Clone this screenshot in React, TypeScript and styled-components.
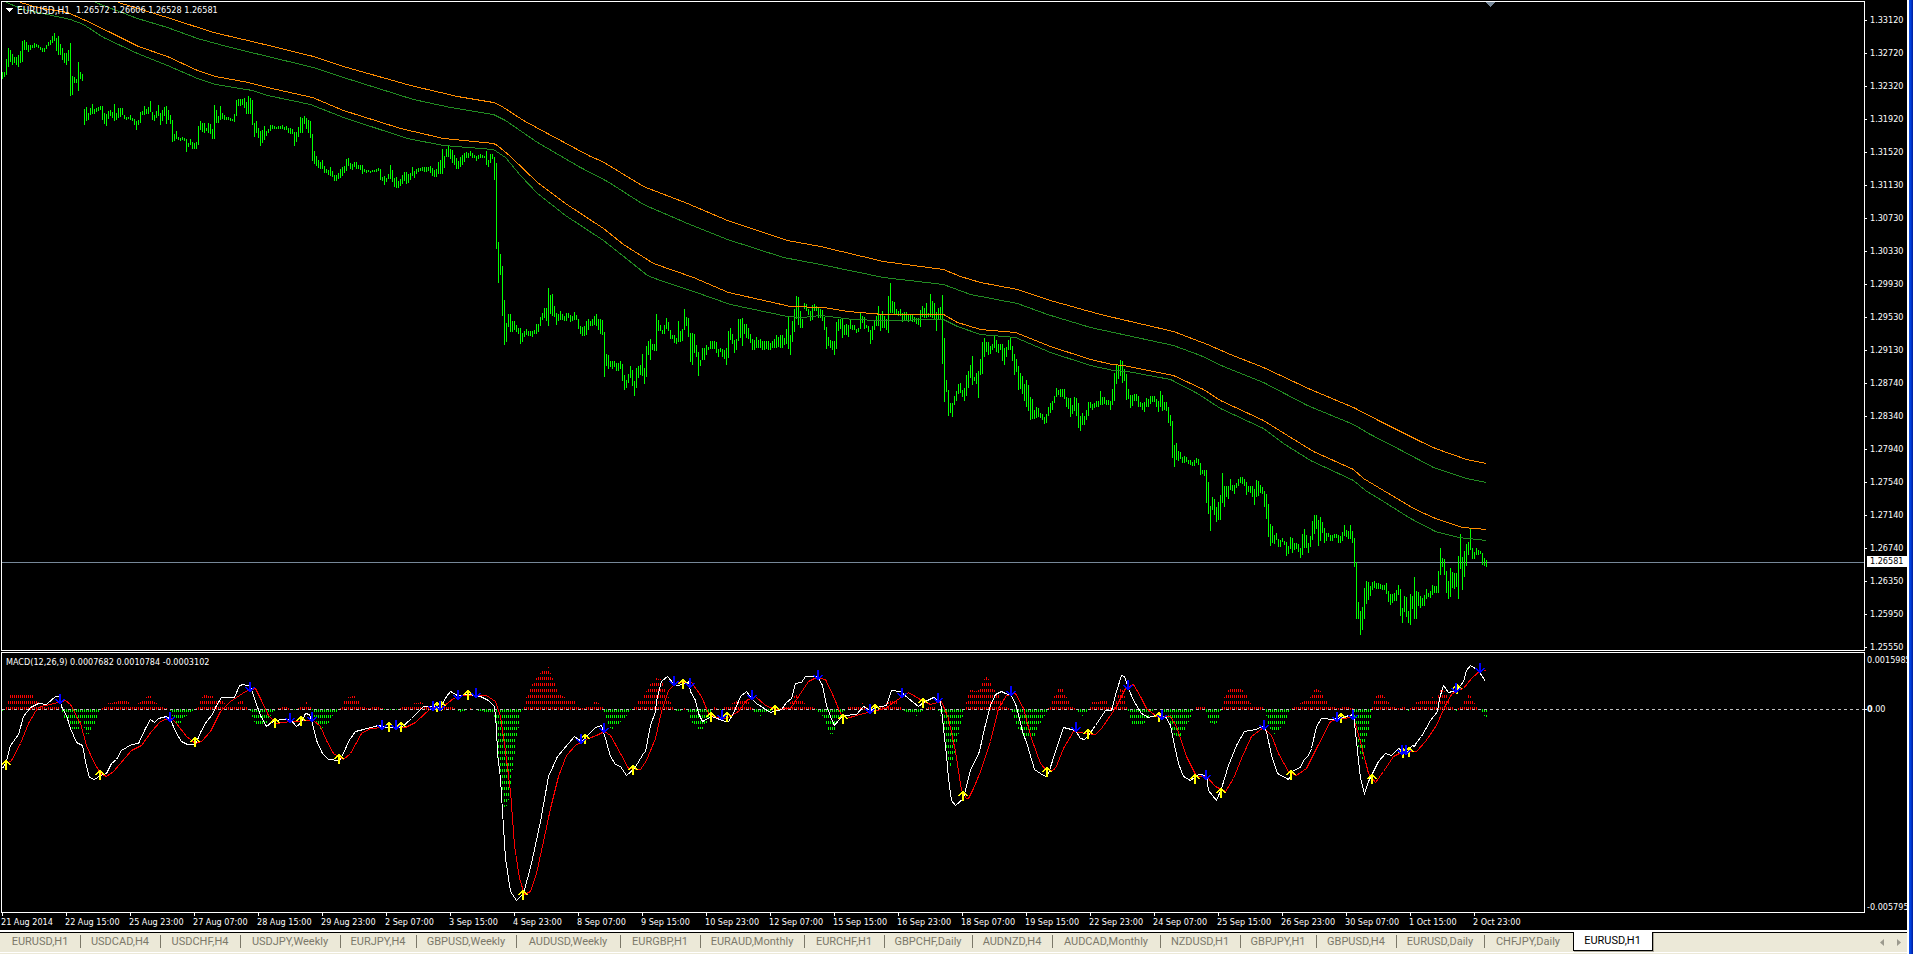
import React from "react";
import styled, { createGlobalStyle } from "styled-components";

/* ---------- data ---------- */

type Point = [number, number];

/** Hourly bars: each run starts at a column and lists high-low pairs, one every two columns. */
const barRuns: { start: number; bars: string }[] = [
  { start: 2, bars: "72-79 72-77 59-75 48-67 50-62 54-65 57-63 57-65 55-67 51-63 41-62 40-50 42-50 45-52 45-50 45-48 43-48 44-47 45-48 47-50 48-52 48-52 45-49 42-46 40-45 36-43 33-41 38-51 36-55 44-55 48-60 53-63 53-65 50-61 43-96 76-95 77-83 79-83 62-91 72-79 74-81" },
  { start: 84, bars: "109-125 107-121 113-120 108-115 104-114 109-114 108-112 107-111 106-110 106-120 113-124 114-126 111-119 110-116 112-118 104-121 113-120 108-118 108-117 108-115 115-119 117-120 117-119 115-120 118-121 119-125 121-130 120-125 112-123 111-115 106-115 109-114 107-114 101-112 112-120 115-121 111-118 105-116 113-125 110-121 107-116 106-124 110-120 115-124" },
  { start: 172, bars: "120-142 134-141 131-139 137-140 138-141 137-140 138-141 139-152 143-147 139-145 142-149 143-149 142-149 126-145 121-130 123-132 123-133 128-131 123-133 124-134 129-139 105-139 110-123 116-123 106-120 113-119 115-120 117-120 117-120 118-121 119-121 114-122 100-116 99-106 99-106 99-105 98-108 102-114 96-114 98-114 100-125 123-137 121-133 128-138" },
  { start: 260, bars: "131-146 130-143 126-140 131-136 129-133 125-131 125-129 126-129 127-129 126-129 126-129 125-129 127-130 126-130 128-133 128-134 129-134 132-146 132-142 127-137 117-133 118-133 116-124 118-129 120-133 121-138 134-161 151-164 156-166 160-168 162-169 160-169 166-173 169-173 170-175 167-176 171-177 175-181 175-181 173-179" },
  { start: 340, bars: "169-178 167-176 166-173 159-171 158-166 163-169 164-170 162-167 162-169 165-169 165-170 165-174 169-172 170-173 170-172 171-173 170-172 170-172 169-172 168-171 169-180 177-181 176-185 178-182 174-179 165-179 170-182 178-187 177-188 181-188 179-186 175-184 172-181 172-184 174-183 173-180 167-176 171-178 169-174 168-172 168-171 167-171 167-172 167-172 167-171" },
  { start: 430, bars: "166-173 168-176 170-177 169-177 162-174 160-174 149-174 156-168 149-157 145-157 149-159 150-163 155-165 158-169 161-169 157-167 155-165 153-162 152-158 153-158 151-156 153-158 155-158 156-161 155-159 154-158 155-158 156-158 151-165 160-167 154-163 154-159 157-180" },
  { start: 496, bars: "163-249 242-283 254-275 266-316 300-345 323-342 314-327 314-332 321-332 321-330 325-332 328-334 328-344 333-342 331-337 329-335 331-336 331-336 331-337 330-334 324-334 324-332 317-326 313-320 308-318 308-321 288-326 295-314 294-316 306-317 313-325 314-321 311-320 314-320 316-321 313-321 313-318 315-322 316-321 312-320 315-320 319-329 326-334 327-336 326-336 321-335 319-330 321-326 319-326 316-325 314-326 319-330 319-334 320-335" },
  { start: 604, bars: "332-377 354-366 355-369 361-367 361-369 361-367 363-371 363-371 361-369 364-381 375-390 380-388 374-383 366-378 370-386 381-396 368-388 366-378 365-375 354-376 368-384 346-377 341-355 339-360 344-350 344-351" },
  { start: 656, bars: "314-351 320-331 325-331 330-334 325-334 318-329 322-331 330-339 335-339 335-343 338-344 321-342 331-342 329-341 309-330 317-326 318-337 333-362 333-365 334-353 345-357 352-376 360-366 348-360 348-360 345-355 347-350 341-349 341-349 341-349 342-353 349-357 348-352 349-357 350-359 348-365 331-358 328-340 334-344 340-353" },
  { start: 736, bars: "339-350 319-341 319-338 318-346 324-334 324-338 328-339 334-343 339-350 340-350 337-348 340-348 339-348 341-350 341-350 341-349 341-350 343-350 341-348 339-348 335-348 337-347 335-348 335-348 338-345 329-344 316-349 335-355 321-342 309-332 296-319 297-325 311-328 319-328" },
  { start: 804, bars: "303-309 304-311 309-315 311-321 305-320 304-311 306-311 307-318 309-318 310-321 317-330 327-349 337-346 340-348 341-350 341-355 322-349 319-331 319-329 319-338 325-335 324-335 325-337 320-329 325-330 325-330 329-333 328-332 312-329 316-323 317-329 325-328 326-332 330-344 326-340 320-330 316-326 306-326 315-331 311-328 316-328 319-330" },
  { start: 888, bars: "296-333 283-313 301-313 302-314 309-315 311-316 309-316 313-322 312-321 312-320 314-322 314-320 315-322 317-322 318-324 318-325 310-327 306-317 308-318 303-318 313-317 294-317 301-318 303-319 312-331 308-320 307-320 295-364 338-402 380-392 390-416 403-413 403-417 396-405 391-401 384-394 383-393 390-397 388-401 375-396 371-388 365-378" },
  { start: 972, bars: "356-385 377-381 373-384 371-398 359-375 342-374 338-357 342-352 342-355 346-354 344-350 336-348 340-352 344-353 344-350 344-361 348-365 347-357 340-350 338-350 346-361 354-375 359-372 366-390 373-389 376-394 384-401 380-407 385-411 397-420 399-419 410-419 407-418 408-417 413-418 414-420 417-424 414-423 407-416 403-413 401-410 396-403" },
  { start: 1056, bars: "388-397 390-395 389-397 389-397 389-399 397-407 398-409 398-417 405-414 397-411 398-416 403-428 416-431 413-425 416-425 410-420 402-416 402-408 404-410 403-408 401-407 401-407 391-405 397-405 397-404 400-405 400-405 401-410 389-405 373-401 365-384 365-379 360-376 361-383 369-381 374-400 389-399 395-408 395-406 394-401 394-401 396-407" },
  { start: 1140, bars: "402-407 403-410 402-412 398-407 399-407 396-404 396-402 396-402 399-407 401-412 391-407 395-411 402-410 402-411 407-423 415-426 421-458 445-467 443-460 451-461 452-459 457-463 456-463 457-462 460-464 460-465 462-466 460-466 458-463 459-465 463-475 470-474 470-476 470-503 482-514 506-531 497-510 499-515 507-522 502-520 495-520" },
  { start: 1222, bars: "473-503 486-507 486-497 486-499 479-490 485-491 485-494 483-488 479-486 477-483 477-484 479-486 482-495 486-492 486-493 486-497 489-505 480-497 481-496 485-493 487-494 491-507 494-519 504-537 524-546 526-543 535-544 533-540 539-547 540-547 538-542 541-545 542-556 546-554 537-549 538-553 543-550 543-549 544-552 548-558 534-555 529-548 535-548 543-553 536-547" },
  { start: 1312, bars: "521-540 515-534 515-529 520-546 517-541 522-533 528-543 533-541 533-537 535-541 535-541 534-538 534-538 535-543 536-543 532-541 525-536 530-537 531-539 525-539 531-543" },
  { start: 1354, bars: "538-567 562-619 602-619 611-635 607-630 588-619 581-604 582-600 586-596 582-590 581-588 583-589 583-589 584-589 585-590 585-590 583-594 591-602 594-605 594-603 593-601 590-601 585-595 589-616 608-623 596-612 597-617 611-623 594-625 596-609 577-619 591-619 592-606 596-608 598-606 595-606 589-599 593-597 591-598 585-595 586-593 586-593" },
  { start: 1438, bars: "571-593 548-575 558-567 559-575 571-593 581-599 568-597 572-588 573-589 573-587 556-599 534-569 557-590 551-577 544-566 542-555 528-550 548-559 552-559 548-555 550-555 551-554 553-565 558-566 560-567" },
];

const slowOrange = "118,2 170,18 213,32 260,43 313,56 343,66 410,85 457,96 493,102 500,105 523,120 547,133 590,156 602,161 643,186 687,203 727,220 787,240 820,246 883,261 943,269 960,276 980,282 1017,289 1050,300 1100,314 1173,331 1207,344 1230,354 1263,367 1310,389 1353,407 1380,421 1420,441 1435,448 1466,459 1486,463";
const slowGreen = "95,2 137,18 167,27 197,38 230,47 313,67 343,77 413,99 450,107 493,114 505,120 537,142 580,167 607,181 643,204 687,223 727,239 783,257 820,264 883,277 943,284 970,294 1017,303 1047,314 1090,327 1113,332 1173,345 1200,355 1223,366 1263,382 1307,405 1353,424 1370,434 1401,450 1433,467 1466,478 1486,482";
const fastOrange = "20,2 37,7 67,12 83,19 110,32 138,46 167,56 197,70 215,76 248,82 267,87 312,97 343,110 400,128 443,138 493,143 497,145 510,156 537,182 565,203 603,228 623,244 653,263 693,277 728,292 790,306 823,307 847,311 883,314 943,314 957,322 980,329 1015,332 1050,346 1090,359 1112,364 1123,365 1173,375 1203,389 1220,400 1263,420 1287,435 1313,451 1353,469 1363,478 1383,490 1415,509 1435,518 1462,527 1486,529";
const fastGreen = "6,2 23,9 47,14 70,19 83,24 103,37 137,53 167,65 197,78 215,84 252,90 267,95 310,104 343,117 407,138 443,145 493,149 505,157 520,175 537,193 565,215 603,240 627,259 647,275 660,280 693,291 730,304 787,316 802,317 820,315 853,319 880,320 943,319 957,326 980,334 1015,337 1050,352 1090,365 1113,370 1127,371 1170,379 1197,393 1220,408 1263,428 1283,443 1310,460 1353,480 1365,490 1383,501 1410,518 1435,531 1458,537 1486,540";

/** Oscillator samples are kept in thirds of a pixel, in four stretches with their own origin. */
type Stretch = { origin: number; samples: string };

const macdLine: Stretch[] = [
  { origin: 0, samples: "6,370 18,350 30,300 55,268 70,215 90,187 115,175 140,178 165,155 178,155 185,185 200,210 210,250 228,292 247,302 258,365 268,398 283,404 300,392 318,385 335,355 350,343 365,316 395,298 415,296 435,250 450,222 462,232 475,220 500,213 510,222 525,260 545,288 562,298 587,298 600,262 620,228 637,208 645,188 665,158 703,157 718,122 730,117 750,125 765,170 780,212 800,243 815,232 840,224 870,222 888,244 905,232 915,206 928,207 938,235 950,285 968,325 985,343 1018,347 1030,325 1045,290 1065,258 1090,252 1135,240 1160,248 1205,248 1235,220 1270,185 1290,183 1320,188 1340,155 1352,138 1372,152 1405,148 1440,155" },
  { origin: 480, samples: "0,153 25,165 43,185 50,250 53,325 60,400 66,500 75,640 90,740 110,767 130,745 155,655 180,530 205,395 232,335 283,275 305,290 322,270 345,246 363,242 375,280 392,335 405,358 422,365 440,390 462,370 490,325 495,320 510,240 525,200 528,165 545,110 562,94 580,115 590,122 610,118 625,108 632,140 645,165 655,205 668,230 695,215 735,230 745,228 760,205 780,155 798,138 815,160 830,175 870,202 905,193 920,172 935,160 945,115 965,112 977,94 1012,95 1028,120 1040,180 1050,215 1062,240 1075,225 1090,212 1130,208 1150,185 1170,195 1190,188 1220,180 1235,137 1262,138 1285,160 1315,183 1330,172 1360,157 1382,170 1388,220 1398,330 1405,400 1415,465 1425,480 1450,460" },
  { origin: 940, samples: "90,375 118,320 133,250 150,180 165,148 183,138 195,145 215,150 228,185 247,260 262,300 283,372 300,385 315,393 325,385 345,320 370,248 405,255 420,280 432,284 445,272 465,240 495,197 515,195 530,140 543,90 552,93 565,130 580,165 605,205 625,217 645,210 675,215 690,240 702,300 715,355 730,395 752,407 775,387 798,390 805,435 830,466 845,430 865,360 890,300 912,258 945,252 968,243 980,260 993,330 1013,385 1045,402 1060,375 1080,368 1090,345 1105,330 1115,310 1128,245 1145,220 1180,222 1240,208 1250,290 1260,400 1273,445 1285,410 1315,350 1335,325 1355,330 1375,310 1400,322" },
  { origin: 1400, samples: "38,302 44,305 48,292 65,275 90,225 112,198 118,160 130,120 145,143 168,135 190,110 200,75 212,61 235,75 257,108" },
];

const signalLine: Stretch[] = [
  { origin: 0, samples: "8,366 20,355 35,345 60,295 85,235 105,200 120,185 150,178 195,165 210,178 240,235 260,300 280,350 300,385 318,395 340,380 395,315 425,300 455,260 480,230 510,218 530,235 560,275 587,295 605,290 630,260 660,200 690,170 735,138 765,130 785,165 805,210 830,235 870,228 940,225 960,245 980,285 1000,325 1030,342 1050,325 1085,265 1110,250 1150,246 1215,247 1245,232 1290,190 1330,183 1360,160 1380,150 1437,150" },
  { origin: 480, samples: "0,150 20,152 45,170 60,215 75,320 90,440 103,600 118,700 132,748 150,740 170,685 190,590 210,490 235,395 260,330 285,300 310,287 350,272 372,260 390,270 420,325 445,370 480,372 500,345 525,280 545,200 565,135 590,112 635,112 665,155 685,205 705,218 740,220 775,200 800,165 825,155 855,180 885,193 930,190 960,145 985,110 1010,97 1035,103 1060,155 1080,205 1100,220 1150,205 1215,190 1250,165 1285,142 1320,163 1350,178 1385,170 1405,220 1425,320 1445,435 1460,460" },
  { origin: 940, samples: "85,460 100,430 120,380 150,290 175,190 200,150 225,145 250,190 275,280 300,355 325,382 345,370 370,310 400,258 440,265 465,268 485,250 510,210 530,185 555,130 580,118 600,155 620,190 650,213 690,215 710,245 740,335 768,395 800,395 825,425 855,440 880,400 905,340 935,275 970,247 995,270 1015,325 1045,380 1070,390 1100,370 1130,310 1170,230 1200,220 1240,218 1265,300 1285,385 1305,412 1330,380 1360,335 1390,320" },
  { origin: 1400, samples: "48,318 75,290 108,240 120,215 135,180 155,148 170,135 190,130 215,100 240,75 250,73 258,80" },
];

/** Histogram envelope: sample position in thirds, signed height in pixels. */
const histogram: Stretch[] = [
  { origin: 0, samples: "6,-2 12,-1 18,2 24,9 30,14 98,14 104,8 116,7 122,3 138,1 145,3 178,2 186,-3 192,-8 200,-12 210,-20 240,-20 246,-9 252,-18 260,-25 265,-25 285,-14 292,-8 298,-1 305,1 318,3 326,6 350,7 365,9 385,7 390,2 426,8 445,13 452,13 460,8 470,6 478,2 500,1 510,-1 514,-5 530,-14 542,-14 550,-8 565,-6 575,-3 585,-1 598,4 602,9 610,14 640,13 645,10 670,8 680,3 695,2 714,6 722,9 728,8 735,3 742,1 750,-1 756,-7 765,-14 785,-19 800,-14 806,-8 818,-6 822,-2 832,1 855,2 868,1 880,-1 888,-2 895,1 905,2 920,7 933,2 940,-3 948,-14 962,-20 974,-18 985,-14 998,-7 1010,-5 1016,-1 1025,3 1033,8 1045,12 1063,13 1080,6 1086,3 1100,1 1135,2 1145,1 1155,-1 1190,-1 1205,1 1212,3 1235,5 1265,7 1278,3 1310,3 1330,5 1345,5 1365,1 1378,-3 1395,-2 1410,1 1430,-1 1434,-2" },
  { origin: 480, samples: "0,-2 40,-4 45,-10 50,-35 56,-55 62,-72 68,-85 73,-98 79,-98 85,-92 92,-75 98,-60 104,-45 110,-26 116,-18 120,-8 126,-2 132,3 140,13 150,20 165,30 175,33 185,38 206,42 212,36 225,25 240,14 256,12 265,9 284,8 290,3 300,1 330,2 345,7 358,6 368,2 374,-6 385,-18 398,-20 412,-16 424,-12 436,-9 446,-4 452,-1 465,2 475,8 490,12 500,18 512,25 528,31 542,30 555,20 565,12 577,3 585,-2 605,-2 615,1 625,-2 632,-12 640,-15 655,-20 668,-20 680,-14 690,-9 700,2 708,1 720,-1 730,1 745,4 760,6 775,9 785,12 800,8 815,4 822,-5 840,-7 855,-4 870,-2 900,1 925,4 935,8 945,14 955,13 965,8 985,4 1005,1 1015,-4 1030,-8 1038,-15 1050,-25 1062,-25 1072,-14 1085,-5 1095,-1 1105,2 1130,2 1148,6 1160,2 1175,-3 1195,1 1215,5 1235,9 1250,8 1262,2 1272,-2 1300,-5 1312,-7 1322,-3 1345,2 1365,2 1376,-2" },
  { origin: 940, samples: "0,-4 8,-18 15,-35 22,-50 32,-61 40,-50 50,-33 60,-18 68,-7 75,2 80,8 90,19 105,18 118,19 130,28 140,33 150,28 162,20 175,14 185,7 195,3 207,1 215,-2 220,-8 228,-14 240,-24 255,-27 285,-27 292,-20 302,-14 315,-6 322,-1 330,4 345,14 355,20 368,20 378,13 388,6 400,2 410,-1 418,-6 430,-7 440,-3 447,1 455,7 500,8 510,3 522,2 530,12 540,20 550,19 558,6 565,-1 570,-10 578,-15 612,-15 625,-10 638,-2 660,1 665,-2 680,-4 690,-14 700,-25 712,-30 718,-30 728,-24 740,-18 750,-9 758,-2 768,2 795,2 800,-6 810,-14 828,-15 838,-8 842,-1 847,4 855,14 868,20 905,20 920,14 932,6 940,2 970,2 978,-5 985,-14 995,-24 1008,-25 1020,-20 1035,-14 1045,-7 1050,-2 1057,1 1062,3 1088,7 1118,14 1125,20 1140,19 1150,13 1160,8 1168,2 1200,1 1215,2 1238,1 1245,-10 1252,-30 1260,-48 1270,-50 1278,-30 1288,-18 1295,-2 1302,8 1312,14 1330,14 1345,7 1355,4 1370,1 1378,1" },
  { origin: 1400, samples: "0,1 12,2 25,-2 35,2 50,7 80,9 95,12 112,9 118,18 130,20 140,14 150,5 160,1 168,-3 178,2 192,7 205,14 213,13 222,7 232,1 240,-1 248,-3 255,-8 262,-8" },
];

const buyMarks: Stretch[] = [
  { origin: 0, samples: "18,362 300,390 587,293 827,234 905,229 1018,342 1169,248 1205,248 1313,187 1324,185 1404,152" },
  { origin: 480, samples: "131,750 317,284 461,377 611,117 695,218 743,218 887,197 1091,222 1187,194 1331,174 1451,455" },
  { origin: 940, samples: "323,383 444,269 659,216 767,402 845,446 1055,392 1205,221 1296,402 1391,325 1409,323" },
  { origin: 1400, samples: "173,133" },
];

const sellMarks: Stretch[] = [
  { origin: 0, samples: "180,162 510,216 750,126 870,220 936,218 1146,242 1188,242 1301,183 1320,184 1374,150 1428,146" },
  { origin: 480, samples: "305,282 372,251 582,110 630,115 726,212 816,152 1014,92 1170,192 1266,144 1374,160" },
  { origin: 940, samples: "215,140 408,248 564,120 666,210 798,390 972,242 1193,216 1241,212 1386,317 1398,317" },
  { origin: 1400, samples: "168,131 240,69" },
];

const priceLabels = [
  "1.33120", "1.32720", "1.32320", "1.31920", "1.31520", "1.31130", "1.30730",
  "1.30330", "1.29930", "1.29530", "1.29130", "1.28740", "1.28340", "1.27940",
  "1.27540", "1.27140", "1.26740", "1.26350", "1.25950", "1.25550",
];

const timeLabels = [
  "21 Aug 2014", "22 Aug 15:00", "25 Aug 23:00", "27 Aug 07:00", "28 Aug 15:00",
  "29 Aug 23:00", "2 Sep 07:00", "3 Sep 15:00", "4 Sep 23:00", "8 Sep 07:00",
  "9 Sep 15:00", "10 Sep 23:00", "12 Sep 07:00", "15 Sep 15:00", "16 Sep 23:00",
  "18 Sep 07:00", "19 Sep 15:00", "22 Sep 23:00", "24 Sep 07:00", "25 Sep 15:00",
  "26 Sep 23:00", "30 Sep 07:00", "1 Oct 15:00", "2 Oct 23:00",
];

const tabs: { name: string; width: number }[] = [
  { name: "EURUSD,H1", width: 80 },
  { name: "USDCAD,H4", width: 80 },
  { name: "USDCHF,H4", width: 80 },
  { name: "USDJPY,Weekly", width: 100 },
  { name: "EURJPY,H4", width: 76 },
  { name: "GBPUSD,Weekly", width: 100 },
  { name: "AUDUSD,Weekly", width: 104 },
  { name: "EURGBP,H1", width: 80 },
  { name: "EURAUD,Monthly", width: 104 },
  { name: "EURCHF,H1", width: 80 },
  { name: "GBPCHF,Daily", width: 88 },
  { name: "AUDNZD,H4", width: 80 },
  { name: "AUDCAD,Monthly", width: 108 },
  { name: "NZDUSD,H1", width: 80 },
  { name: "GBPJPY,H1", width: 76 },
  { name: "GBPUSD,H4", width: 80 },
  { name: "EURUSD,Daily", width: 88 },
  { name: "CHFJPY,Daily", width: 88 },
];

/* ---------- geometry ---------- */

const PLOT_LEFT = 2;
const PRICE_TOP = 2;
const MACD_TOP = 653;
const SAMPLE_TOP = 645;
const ZERO = 709 - MACD_TOP;

const toPairs = (text: string): Point[] =>
  text.split(" ").map((pair) => pair.split(",").map(Number) as Point);

const barPath = barRuns
  .map(({ start, bars }) =>
    bars
      .split(" ")
      .map((bar, i) => {
        const [high, low] = bar.split("-").map(Number);
        return `M${start + 2 * i - PLOT_LEFT + 0.5} ${high - PRICE_TOP}V${low - PRICE_TOP}`;
      })
      .join("")
  )
  .join("");

const averagePoints = (text: string) =>
  toPairs(text)
    .map(([x, y]) => `${x - PLOT_LEFT + 0.5},${y - PRICE_TOP + 0.5}`)
    .join(" ");

const stretchPoints = (stretches: Stretch[]): Point[] =>
  stretches.flatMap(({ origin, samples }) =>
    toPairs(samples).map(
      ([x, y]): Point => [
        origin + Math.floor(x / 3) - PLOT_LEFT,
        SAMPLE_TOP + Math.floor(y / 3) - MACD_TOP,
      ]
    )
  );

const linePoints = (stretches: Stretch[]) =>
  stretchPoints(stretches)
    .map(([x, y]) => `${x + 0.5},${y + 0.5}`)
    .join(" ");

const histogramPaths = (() => {
  const envelope = histogram.flatMap(({ origin, samples }) =>
    toPairs(samples).map(([x, h]): Point => [origin + x / 3 - PLOT_LEFT, h])
  );
  let up = "";
  let down = "";
  let seg = 0;
  for (let x = 0; x <= 1484; x += 2) {
    while (seg < envelope.length - 2 && envelope[seg + 1][0] < x + 0.5) seg += 1;
    const [x0, h0] = envelope[seg];
    const [x1, h1] = envelope[seg + 1];
    const t = Math.max(0, Math.min(1, (x + 0.5 - x0) / (x1 - x0 || 1)));
    const height = Math.round(h0 + (h1 - h0) * t);
    if (height > 0) up += `M${x + 0.5} ${ZERO + 1}V${ZERO - height}`;
    if (height < 0) down += `M${x + 0.5} ${ZERO}V${ZERO - height}`;
  }
  return { up, down };
})();

/* ---------- styles ---------- */

const GlobalStyle = createGlobalStyle`
  html, body, #root { height: 100%; margin: 0; }
  body { background: #000; overflow: hidden; }
  * { box-sizing: border-box; }
`;

const chartFont = '"DejaVu Sans Condensed", "DejaVu Sans", sans-serif';

const Window = styled.div`
  display: flex;
  height: 100vh;
  background: #000;
`;

const Workspace = styled.main`
  flex: 1;
  min-width: 0;
  display: flex;
  flex-direction: column;
`;

const WindowEdge = styled.div`
  flex: 0 0 6px;
  border-left: 2px solid #fff;
  background: linear-gradient(to right, #0f4fe8, #0040dc 40%, #001c9c);
`;

const ChartArea = styled.section`
  flex: 1;
  min-height: 0;
  display: grid;
  grid-template-columns: minmax(0, 1fr) 42px;
  grid-template-rows: minmax(0, 650fr) minmax(0, 261fr) 17px;
  row-gap: 1px;
  padding: 1px 0 0 1px;
  margin-bottom: -1px;
  color: #fff;
  font: 9px/9px ${chartFont};
  white-space: pre;
`;

const Panel = styled.div`
  position: relative;
  border: 1px solid #fff;
  min-height: 0;
`;

const Plot = styled.svg`
  display: block;
  width: 100%;
  height: 100%;
  shape-rendering: crispEdges;
`;

const PanelTitle = styled.div`
  position: absolute;
  top: 3px;
  left: 4px;
  height: 10px;
  display: flex;
  align-items: center;
  gap: 4px;
`;

const MacdTitle = styled(PanelTitle)`
  top: 4px;
`;

const SymbolName = styled.span`
  font-size: 10px;
  margin-right: 2px;
`;

const Caret = styled.svg`
  width: 7px;
  height: 4px;
`;

const Axis = styled.div`
  position: relative;
  display: flex;
  flex-direction: column;
  justify-content: space-between;
  min-height: 0;
`;

const PriceAxis = styled(Axis)`
  padding-top: 15px;
`;

const MacdAxis = styled(Axis)`
  padding: 4px 0 2px;
  overflow: hidden;
`;

const AxisLabel = styled.div<{ $inset: number; $tick?: boolean }>`
  display: flex;
  align-items: center;
  height: 8px;
  line-height: 8px;

  &::before {
    content: "";
    flex: none;
    width: 2px;
    height: 1px;
    margin-right: ${(p) => p.$inset}px;
    background: ${(p) => (p.$tick ? "#fff" : "transparent")};
  }
`;

const ZeroLabel = styled(AxisLabel)`
  position: absolute;
  left: 0;
  top: calc(100% * 53 / 261);
`;

const BoldZero = styled.span`
  font-weight: bold;
`;

const CurrentPrice = styled.output`
  position: absolute;
  left: 2px;
  right: 0;
  top: calc(100% * 555 / 650);
  height: 11px;
  padding-left: 3px;
  background: #fff;
  color: #000;
  line-height: 11px;
`;

const TimeAxis = styled.div`
  grid-column: 1 / -1;
  display: grid;
  grid-template-columns: repeat(24, calc((100% - 44px) / 29.09375));
  margin-top: -1px;
`;

const TimeLabel = styled.div`
  position: relative;
  padding-top: 5px;

  &::before {
    content: "";
    position: absolute;
    top: 0;
    left: 1px;
    width: 1px;
    height: 3px;
    background: #fff;
  }
`;

const TabBar = styled.nav`
  flex: 0 0 24px;
  display: flex;
  padding-left: 1px;
  border-top: 2px solid #fff;
  background: linear-gradient(
    #000 0 1px,
    #ece9d8 1px 20px,
    #fff 20px 21px,
    #ece9d8 21px
  );
  font: 11px/13px Roboto, sans-serif;
`;

const Tab = styled.button<{ $width: number; $last?: boolean }>`
  flex: 0 1 ${(p) => p.$width}px;
  height: 13px;
  margin-top: 3px;
  padding: 0 1px 0 0;
  border: 0;
  border-right: 1px solid ${(p) => (p.$last ? "transparent" : "#7b7869")};
  background: none;
  color: #7b7869;
  font: inherit;
  text-align: center;
  white-space: nowrap;
`;

const ActiveTab = styled.button`
  flex: 0 1 80px;
  height: 19px;
  padding: 0 1px 1px 0;
  border: 1px solid #000;
  border-top: 0;
  background: #fff;
  box-shadow: 1px 1px 0 #aca899;
  color: #000;
  font: inherit;
  white-space: nowrap;
`;

const TabScroll = styled.div`
  display: flex;
  align-items: center;
  gap: 2px;
  height: 20px;
  margin-left: auto;
  padding-right: 1px;
`;

const ScrollButton = styled.button`
  display: flex;
  align-items: center;
  justify-content: center;
  width: 15px;
  height: 15px;
  padding: 0;
  border: 0;
  background: none;
  color: #9c9a8e;
`;

/* ---------- pieces ---------- */

const BuyArrow = ({ x, y }: { x: number; y: number }) => (
  <path
    transform={`translate(${x} ${y})`}
    fill="#ff0"
    d="M-1 -5h2v1h1v1h1v1h1v1h1v1h-2v-1h-1v-1h-1v7h-2v-7h-1v1h-1v1h-2v-1h1v-1h1v-1h1v-1h1z"
  />
);

const SellArrow = ({ x, y }: { x: number; y: number }) => (
  <path
    transform={`translate(${x} ${y})`}
    fill="#00f"
    d="M-1 5h2v-1h1v-1h1v-1h1v-1h1v-1h-2v1h-1v1h-1v-7h-2v7h-1v-1h-1v-1h-2v1h1v1h1v1h1v1h1z"
  />
);

const PricePlot = () => (
  <Plot viewBox="0 0 1862 648" preserveAspectRatio="none" role="img" aria-label="EURUSD hourly price">
    <path d="M0 560.5H1862" stroke="#778899" />
    <path d={barPath} stroke="#0f0" />
    <g fill="none" strokeWidth="1">
      <polyline points={averagePoints(slowGreen)} stroke="#228b22" />
      <polyline points={averagePoints(fastGreen)} stroke="#228b22" />
      <polyline points={averagePoints(slowOrange)} stroke="#ff8c00" />
      <polyline points={averagePoints(fastOrange)} stroke="#ff8c00" />
    </g>
    <path d="M1484 0h9v1h-1v1h-1v1h-1v1h-1v1h-1v-1h-1v-1h-1v-1h-1v-1h-1z" fill="#778899" />
  </Plot>
);

const MacdPlot = () => (
  <Plot viewBox="0 0 1862 259" preserveAspectRatio="none" role="img" aria-label="MACD oscillator">
    <path d={histogramPaths.up} stroke="#f00" strokeDasharray="3 3" />
    <path d={histogramPaths.down} stroke="#0f0" strokeDasharray="3 3" />
    <path d={`M0 ${ZERO + 0.5}H1862`} stroke="#c0c0c0" strokeDasharray="3 3" />
    <polyline points={linePoints(signalLine)} fill="none" stroke="#f00" />
    <polyline points={linePoints(macdLine)} fill="none" stroke="#fff" />
    {stretchPoints(buyMarks).map(([x, y]) => (
      <BuyArrow key={`b${x}`} x={x} y={y} />
    ))}
    {stretchPoints(sellMarks).map(([x, y]) => (
      <SellArrow key={`s${x}`} x={x} y={y} />
    ))}
  </Plot>
);

export default function App() {
  return (
    <>
      <GlobalStyle />
      <Window>
        <Workspace>
          <ChartArea>
            <Panel>
              <PricePlot />
              <PanelTitle>
                <Caret viewBox="0 0 7 4" shapeRendering="crispEdges" aria-hidden="true">
                  <path d="M0 0h7v1h-1v1h-1v1h-1v1h-1v-1h-1v-1h-1v-1h-1z" fill="#fff" />
                </Caret>
                <SymbolName>EURUSD,H1</SymbolName>
                <span>1.26572 1.26606 1.26528 1.26581</span>
              </PanelTitle>
            </Panel>
            <PriceAxis>
              {priceLabels.map((label) => (
                <AxisLabel key={label} $inset={3} $tick>{label}</AxisLabel>
              ))}
              <CurrentPrice>1.26581</CurrentPrice>
            </PriceAxis>
            <Panel>
              <MacdPlot />
              <MacdTitle>
                <span>MACD(12,26,9) 0.0007682 0.0010784 -0.0003102</span>
              </MacdTitle>
            </Panel>
            <MacdAxis>
              <AxisLabel $inset={0}>0.0015985</AxisLabel>
              <ZeroLabel $inset={0} $tick>
                <BoldZero>0</BoldZero>.00
              </ZeroLabel>
              <AxisLabel $inset={0}>-0.005795</AxisLabel>
            </MacdAxis>
            <TimeAxis>
              {timeLabels.map((label) => (
                <TimeLabel key={label}>{label}</TimeLabel>
              ))}
            </TimeAxis>
          </ChartArea>
          <TabBar aria-label="Open charts">
            {tabs.map((tab, i) => (
              <Tab key={tab.name} type="button" $width={tab.width} $last={i === tabs.length - 1}>
                {tab.name}
              </Tab>
            ))}
            <ActiveTab type="button" aria-current="page">EURUSD,H1</ActiveTab>
            <TabScroll>
              <ScrollButton type="button" aria-label="Scroll tabs left">
                <svg width="4" height="7" viewBox="0 0 4 7" aria-hidden="true">
                  <path d="M4 0v7L0 3.500z" fill="currentColor" />
                </svg>
              </ScrollButton>
              <ScrollButton type="button" aria-label="Scroll tabs right">
                <svg width="4" height="7" viewBox="0 0 4 7" aria-hidden="true">
                  <path d="M0 0v7L4 3.500z" fill="currentColor" />
                </svg>
              </ScrollButton>
            </TabScroll>
          </TabBar>
        </Workspace>
        <WindowEdge />
      </Window>
    </>
  );
}
